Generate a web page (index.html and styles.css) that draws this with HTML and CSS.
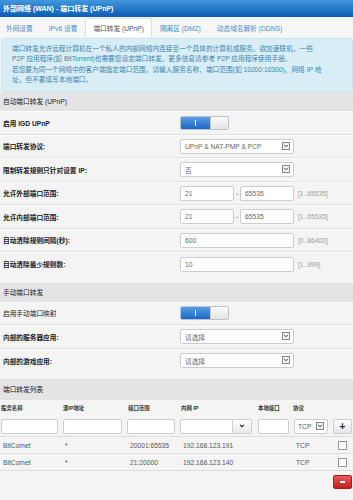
FILE: index.html
```html
<!DOCTYPE html>
<html lang="zh-CN">
<head>
    <meta charset="UTF-8">
    <meta name="viewport" content="width=device-width, initial-scale=1.0">
    <title>外部网络 (WAN) - 端口转发 (UPnP)</title>
    <link rel="stylesheet" href="styles.css">
</head>
<body>
    <div class="titlebar">外部网络 (WAN) - 端口转发 (UPnP)</div>

    <ul class="tabs">
        <li><a>外网设置</a></li>
        <li><a>IPv6 设置</a></li>
        <li class="active"><a>端口转发 (UPnP)</a></li>
        <li><a>隔离区 (DMZ)</a></li>
        <li><a>动态域名解析 (DDNS)</a></li>
    </ul>

    <div class="info">
        端口转发允许远程计算机在一个私人的内部网络内连接至一个具体的计算机或服务。欲加速联机，一些<br>
        P2P 应用程序(如 BitTorrent)也需要您设定端口转发。更多信息请参考 P2P 应用程序使用手册。<br>
        若您要为同一个网络中的客户端指定端口范围，请输入服务名称、端口范围(如 10200:10300)、网络 IP 地<br>
        址，但不要填写本地端口。
    </div>

    <div class="group">
        <div class="group-head">自动端口转发 (UPnP)</div>
        <div class="row">
            <div class="label bold">启用 IGD UPnP</div>
            <div class="ctrl"><span class="toggle"><span class="on"><i></i></span><span class="off"></span></span></div>
        </div>
        <div class="row">
            <div class="label bold">端口转发协议:</div>
            <div class="ctrl"><span class="select">UPnP &amp; NAT-PMP &amp; PCP<b class="arrow"><svg viewBox="0 0 8 8" width="6" height="6"><path d="M1.5 2.5 L4 5 L6.5 2.5" fill="none" stroke="#333" stroke-width="1.3"/></svg></b></span></div>
        </div>
        <div class="row">
            <div class="label bold">限制转发规则只针对设置 IP:</div>
            <div class="ctrl"><span class="select">否<b class="arrow"><svg viewBox="0 0 8 8" width="6" height="6"><path d="M1.5 2.5 L4 5 L6.5 2.5" fill="none" stroke="#333" stroke-width="1.3"/></svg></b></span></div>
        </div>
        <div class="row">
            <div class="label bold">允许外部端口范围:</div>
            <div class="ctrl"><span class="input short">21</span><span class="dash">-</span><span class="input short">65535</span><span class="hint">[1..65535]</span></div>
        </div>
        <div class="row">
            <div class="label bold">允许内部端口范围:</div>
            <div class="ctrl"><span class="input short">21</span><span class="dash">-</span><span class="input short">65535</span><span class="hint">[1..65535]</span></div>
        </div>
        <div class="row">
            <div class="label bold">自动清除规则间隔(秒):</div>
            <div class="ctrl"><span class="input long">600</span><span class="hint">[0..86400]</span></div>
        </div>
        <div class="row">
            <div class="label bold">自动清除最少规则数:</div>
            <div class="ctrl"><span class="input long">10</span><span class="hint">[1..999]</span></div>
        </div>
    </div>

    <div class="group">
        <div class="group-head">手动端口转发</div>
        <div class="row">
            <div class="label">启用手动端口映射</div>
            <div class="ctrl"><span class="toggle"><span class="on"><i></i></span><span class="off"></span></span></div>
        </div>
        <div class="row">
            <div class="label bold">内部的服务器应用:</div>
            <div class="ctrl"><span class="select">请选择<b class="arrow"><svg viewBox="0 0 8 8" width="6" height="6"><path d="M1.5 2.5 L4 5 L6.5 2.5" fill="none" stroke="#333" stroke-width="1.3"/></svg></b></span></div>
        </div>
        <div class="row">
            <div class="label bold">内部的游戏应用:</div>
            <div class="ctrl"><span class="select">请选择<b class="arrow"><svg viewBox="0 0 8 8" width="6" height="6"><path d="M1.5 2.5 L4 5 L6.5 2.5" fill="none" stroke="#333" stroke-width="1.3"/></svg></b></span></div>
        </div>
    </div>

    <div class="group-head list-head">端口转发列表</div>
    <table class="list">
        <colgroup>
            <col style="width:62px"><col style="width:65px"><col style="width:53px"><col style="width:76px"><col style="width:36px"><col style="width:40px"><col style="width:21px">
        </colgroup>
        <thead>
            <tr>
                <th>服务名称</th>
                <th>源IP地址</th>
                <th>端口范围</th>
                <th>内网 IP</th>
                <th class="pl2">本地端口</th>
                <th>协议</th>
                <th></th>
            </tr>
        </thead>
        <tbody>
            <tr class="edit">
                <td><span class="input w1"></span></td>
                <td><span class="input w2"></span></td>
                <td><span class="input w3"></span></td>
                <td><span class="combo"><span class="input w4"></span><span class="drop"><svg viewBox="0 0 8 8" width="6" height="6"><path d="M1.5 2.5 L4 5 L6.5 2.5" fill="none" stroke="#222" stroke-width="1.6"/></svg></span></span></td>
                <td><span class="input w5"></span></td>
                <td><span class="select proto">TCP<b class="arrow"><svg viewBox="0 0 8 8" width="6" height="6"><path d="M1.5 2.5 L4 5 L6.5 2.5" fill="none" stroke="#333" stroke-width="1.3"/></svg></b></span></td>
                <td><span class="btn add">+</span></td>
            </tr>
            <tr class="item">
                <td>BitComet</td>
                <td>*</td>
                <td>20001:65535</td>
                <td>192.168.123.191</td>
                <td></td>
                <td class="proto-cell">TCP</td>
                <td class="chk-cell"><span class="check"></span></td>
            </tr>
            <tr class="item">
                <td>BitComet</td>
                <td>*</td>
                <td>21:20000</td>
                <td>192.168.123.140</td>
                <td></td>
                <td class="proto-cell">TCP</td>
                <td class="chk-cell"><span class="check"></span></td>
            </tr>
        </tbody>
    </table>
    <div class="actions"><span class="btn del"><i></i></span></div>
</body>
</html>
```

FILE: styles.css
```css
body {
    margin: 0;
    background-color: #f4f4f4;
    font-family: "Liberation Sans", "Noto Sans CJK SC", sans-serif;
    font-size: 6.7px;
    color: #333;
}

.titlebar {
    height: 17px;
    line-height: 17px;
    padding-left: 3px;
    background: linear-gradient(#4197df, #0b5cb3);
    color: #fff;
    font-weight: bold;
    font-size: 7px;
}

.tabs {
    display: flex;
    list-style: none;
    margin: 0;
    padding: 1px 0 0 0;
    height: 19px;
    background-color: #f6f6f6;
}
.tabs li {
    display: flex;
    align-items: center;
    padding: 0 7px;
    color: #4e8cc6;
    border: 1px solid transparent;
    border-bottom: none;
}
.tabs li:first-child {
    padding-left: 5px;
}
.tabs li.active {
    background-color: #fff;
    border-color: #ddd;
    border-radius: 3px 3px 0 0;
    color: #555;
}

.info {
    box-sizing: border-box;
    height: 54px;
    margin: 1px 0 0 1px;
    padding: 5px 0 0 10px;
    background-color: #d9edf7;
    border: 1px solid #c6e6f1;
    border-radius: 3px;
    color: #3a87ad;
    line-height: 10.3px;
    white-space: nowrap;
}

.group {
    padding-bottom: 7px;
}
.group:first-of-type {
    margin-top: 5px;
}
.group-head {
    height: 19px;
    line-height: 19px;
    padding-left: 3px;
    background-color: #e4e4e4;
    color: #222;
}
.list-head {
    height: 21px;
    line-height: 21px;
}

.row {
    box-sizing: border-box;
    display: flex;
    align-items: center;
    height: 23.5px;
    border-bottom: 1px solid #e2e2e2;
    border-top: 1px solid #fbfbfb;
}
.row:last-child {
    border-bottom: none;
}
.label {
    width: 177px;
    padding-left: 3px;
    color: #222;
}
.label.bold {
    font-weight: bold;
}
.ctrl {
    display: flex;
    align-items: center;
}

.toggle {
    display: flex;
    width: 49px;
    height: 14px;
    border: 1px solid #b9c4cf;
    border-radius: 2px;
    box-sizing: border-box;
    overflow: hidden;
}
.toggle .on {
    width: 29px;
    background: linear-gradient(#5a9ee6, #1d67c6);
    display: flex;
    align-items: center;
    justify-content: center;
}
.toggle .on i {
    width: 1px;
    height: 6px;
    background-color: #fff;
}
.toggle .off {
    flex: 1;
    background: linear-gradient(#fbfbfb, #e3e3e3);
    border-left: 1px solid #c8c8c8;
}

.select, .input {
    box-sizing: border-box;
    display: flex;
    align-items: center;
    height: 15px;
    padding-left: 4px;
    background-color: #fff;
    border: 1px solid #cdcdcd;
    border-radius: 2px;
    color: #666;
}
.select {
    width: 114px;
    position: relative;
}
.select .arrow {
    position: absolute;
    right: 3px;
    top: 2px;
    width: 8px;
    height: 8px;
    border: 1px solid #888;
    box-sizing: border-box;
    display: flex;
    align-items: center;
    justify-content: center;
    background: #f3f3f3;
}
.input.short {
    width: 54px;
}
.input.long {
    width: 114px;
}
.dash {
    width: 6px;
    text-align: center;
    color: #666;
}
.hint {
    margin-left: 4px;
    color: #a0a0a0;
}

.list {
    width: 353px;
    table-layout: fixed;
    border-collapse: collapse;
}
.list th {
    height: 16px;
    padding: 0 0 0 1px;
    text-align: left;
    font-size: 5.4px;
    font-weight: bold;
    color: #333;
}
.list th.pl2 {
    padding-left: 2px;
}
.list td {
    padding: 0;
}
.edit td {
    height: 20px;
}
.edit .input {
    height: 15px;
}
.input.w1 { width: 57px; margin-left: 1px; }
.input.w2 { width: 59px; margin-left: 1px; }
.input.w3 { width: 48px; margin-left: 0; }
.input.w4 { width: 53px; border-radius: 2px 0 0 2px; }
.input.w5 { width: 31px; margin-left: 2px; }
.combo {
    display: flex;
}
.drop {
    box-sizing: border-box;
    width: 19px;
    height: 15px;
    display: flex;
    align-items: center;
    justify-content: center;
    background: linear-gradient(#fff, #e8e8e8);
    border: 1px solid #cdcdcd;
    border-left: none;
    border-radius: 0 2px 2px 0;
}
.select.proto {
    width: 34px;
    margin-left: 2px;
    padding-left: 3px;
    color: #555;
}
.btn {
    box-sizing: border-box;
    display: flex;
    align-items: center;
    justify-content: center;
    width: 19px;
    height: 15px;
    border-radius: 2px;
}
.btn.add {
    margin-left: 1px;
    background: linear-gradient(#fff, #e6e6e6);
    border: 1px solid #ccc;
    font-weight: bold;
    font-size: 10px;
    color: #222;
}
.item td {
    height: 16px;
    border-bottom: 1px solid #ddd;
    padding-left: 3px;
    color: #555;
    white-space: nowrap;
}
.item:first-of-type td,
.edit + .item td {
    border-top: 1px solid #ddd;
}
.item td.proto-cell {
    padding-left: 4px;
}
.item td.chk-cell {
    padding-left: 0;
    text-align: center;
}
.check {
    display: inline-block;
    width: 7px;
    height: 7px;
    border: 1px solid #999;
    background-color: #fff;
    vertical-align: middle;
}

.actions {
    display: flex;
    justify-content: flex-end;
    padding: 4px 1px 0 0;
}
.btn.del {
    height: 14px;
    background: linear-gradient(#ea5a5a, #c41c1c);
    border: 1px solid #b31818;
}
.btn.del i {
    width: 5px;
    height: 2px;
    background-color: #fff;
}
```
